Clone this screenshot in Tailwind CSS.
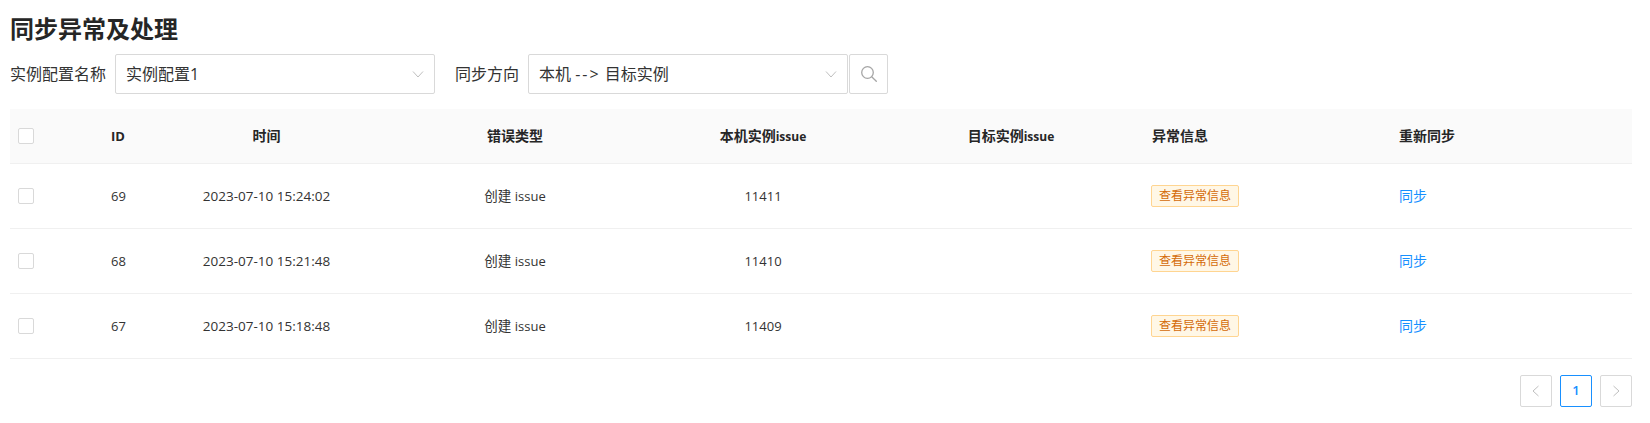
<!DOCTYPE html>
<html lang="zh-CN">
<head>
    <meta charset="UTF-8">
    <title>同步异常及处理</title>
    <script src="https://cdn.jsdelivr.net/npm/@tailwindcss/browser@4"></script>
</head>
<body class="bg-white min-h-screen font-['Open_Sans','Noto_Sans_CJK_SC',sans-serif] text-[#333]">
    <main class="px-[10px] pt-[14px] w-[1642px]">
        <h1 class="text-2xl leading-[30px] font-bold text-[#262626]">同步异常及处理</h1>

        <!-- filters -->
        <div class="flex items-center mt-[10px] text-base">
            <label class="w-[105px] shrink-0">实例配置名称</label>
            <div class="w-[320px] h-10 border border-[#d9d9d9] rounded-[2px] flex items-center justify-between pl-[10px] pr-[10px]">
                <span>实例配置1</span>
                <svg class="w-3 h-3 text-[#bfbfbf]" viewBox="0 0 12 12" fill="none" stroke="currentColor"><path d="M1 3.500 6 9l5-5.500"/></svg>
            </div>
            <label class="ml-5 w-[73px] shrink-0">同步方向</label>
            <div class="w-[320px] h-10 border border-[#d9d9d9] rounded-[2px] flex items-center justify-between pl-[10px] pr-[10px]">
                <span>本机 <span class="tracking-[2px]">--&gt;</span> 目标实例</span>
                <svg class="w-3 h-3 text-[#bfbfbf]" viewBox="0 0 12 12" fill="none" stroke="currentColor"><path d="M1 3.500 6 9l5-5.500"/></svg>
            </div>
            <button class="w-[39px] h-10 ml-px border border-[#d9d9d9] rounded-[2px] flex items-center justify-center text-[#a6a6a6]">
                <svg class="w-4 h-4" viewBox="0 0 16 16" fill="none" stroke="currentColor" stroke-width="1.300"><circle cx="6.500" cy="6.500" r="5.800"/><path d="m10.700 10.700 5 5"/></svg>
            </button>
        </div>

        <!-- table -->
        <table class="mt-[15px] w-[1622px] table-fixed border-separate border-spacing-0 text-[13.500px]">
            <thead>
                <tr class="bg-[#fafafa] text-[#262626] text-sm">
                    <th class="w-[87px] h-[55px] border-b border-[#f0f0f0] pl-2 text-left font-bold"><span class="block w-4 h-4 bg-white border border-[#d9d9d9] rounded-[2px]"></span></th>
                    <th class="w-[45px] border-b border-[#f0f0f0] pl-[14px] text-left font-bold text-[13px]">ID</th>
                    <th class="w-[249px] border-b border-[#f0f0f0] font-bold">时间</th>
                    <th class="w-[248px] border-b border-[#f0f0f0] font-bold">错误类型</th>
                    <th class="w-[248px] border-b border-[#f0f0f0] font-bold">本机实例<span class="text-xs">issue</span></th>
                    <th class="w-[248px] border-b border-[#f0f0f0] font-bold">目标实例<span class="text-xs">issue</span></th>
                    <th class="w-[250px] border-b border-[#f0f0f0] pl-[17px] text-left font-bold">异常信息</th>
                    <th class="w-[247px] border-b border-[#f0f0f0] pl-[14px] text-left font-bold">重新同步</th>
                </tr>
            </thead>
            <tbody>
                <tr>
                    <td class="h-[65px] border-b border-[#f0f0f0] pl-2"><span class="block w-4 h-4 border border-[#d9d9d9] rounded-[2px]"></span></td>
                    <td class="border-b border-[#f0f0f0] pl-[14px] pt-px text-[13px]">69</td>
                    <td class="border-b border-[#f0f0f0] text-center">2023-07-10 15:24:02</td>
                    <td class="border-b border-[#f0f0f0] text-center">创建 <span class="text-[13px]">issue</span></td>
                    <td class="border-b border-[#f0f0f0] pt-px text-center text-[13px]">11411</td>
                    <td class="border-b border-[#f0f0f0]"></td>
                    <td class="border-b border-[#f0f0f0] pl-4"><span class="inline-block w-[88px] h-[22px] leading-5 text-center text-xs text-[#d46b08] bg-[#fff7e6] border border-[#ffd591] rounded-[2px]">查看异常信息</span></td>
                    <td class="border-b border-[#f0f0f0] pl-[14px] text-sm text-[#1890ff]">同步</td>
                </tr>
                <tr>
                    <td class="h-[65px] border-b border-[#f0f0f0] pl-2"><span class="block w-4 h-4 border border-[#d9d9d9] rounded-[2px]"></span></td>
                    <td class="border-b border-[#f0f0f0] pl-[14px] pt-px text-[13px]">68</td>
                    <td class="border-b border-[#f0f0f0] text-center">2023-07-10 15:21:48</td>
                    <td class="border-b border-[#f0f0f0] text-center">创建 <span class="text-[13px]">issue</span></td>
                    <td class="border-b border-[#f0f0f0] pt-px text-center text-[13px]">11410</td>
                    <td class="border-b border-[#f0f0f0]"></td>
                    <td class="border-b border-[#f0f0f0] pl-4"><span class="inline-block w-[88px] h-[22px] leading-5 text-center text-xs text-[#d46b08] bg-[#fff7e6] border border-[#ffd591] rounded-[2px]">查看异常信息</span></td>
                    <td class="border-b border-[#f0f0f0] pl-[14px] text-sm text-[#1890ff]">同步</td>
                </tr>
                <tr>
                    <td class="h-[65px] border-b border-[#f0f0f0] pl-2"><span class="block w-4 h-4 border border-[#d9d9d9] rounded-[2px]"></span></td>
                    <td class="border-b border-[#f0f0f0] pl-[14px] pt-px text-[13px]">67</td>
                    <td class="border-b border-[#f0f0f0] text-center">2023-07-10 15:18:48</td>
                    <td class="border-b border-[#f0f0f0] text-center">创建 <span class="text-[13px]">issue</span></td>
                    <td class="border-b border-[#f0f0f0] pt-px text-center text-[13px]">11409</td>
                    <td class="border-b border-[#f0f0f0]"></td>
                    <td class="border-b border-[#f0f0f0] pl-4"><span class="inline-block w-[88px] h-[22px] leading-5 text-center text-xs text-[#d46b08] bg-[#fff7e6] border border-[#ffd591] rounded-[2px]">查看异常信息</span></td>
                    <td class="border-b border-[#f0f0f0] pl-[14px] text-sm text-[#1890ff]">同步</td>
                </tr>
            </tbody>
        </table>

        <!-- pagination -->
        <div class="flex justify-end gap-2 mt-4 w-[1622px]">
            <button class="w-8 h-8 border border-[#d9d9d9] rounded-[2px] flex items-center justify-center text-[#bfbfbf]">
                <svg class="w-3 h-3" viewBox="0 0 12 12" fill="none" stroke="currentColor"><path d="M8.500 1 3 6l5.500 5"/></svg>
            </button>
            <button class="w-8 h-8 border border-[#1890ff] rounded-[2px] text-[13px] font-semibold text-[#1890ff]">1</button>
            <button class="w-8 h-8 border border-[#d9d9d9] rounded-[2px] flex items-center justify-center text-[#bfbfbf]">
                <svg class="w-3 h-3" viewBox="0 0 12 12" fill="none" stroke="currentColor"><path d="M3.500 1 9 6l-5.500 5"/></svg>
            </button>
        </div>
    </main>
</body>
</html>
